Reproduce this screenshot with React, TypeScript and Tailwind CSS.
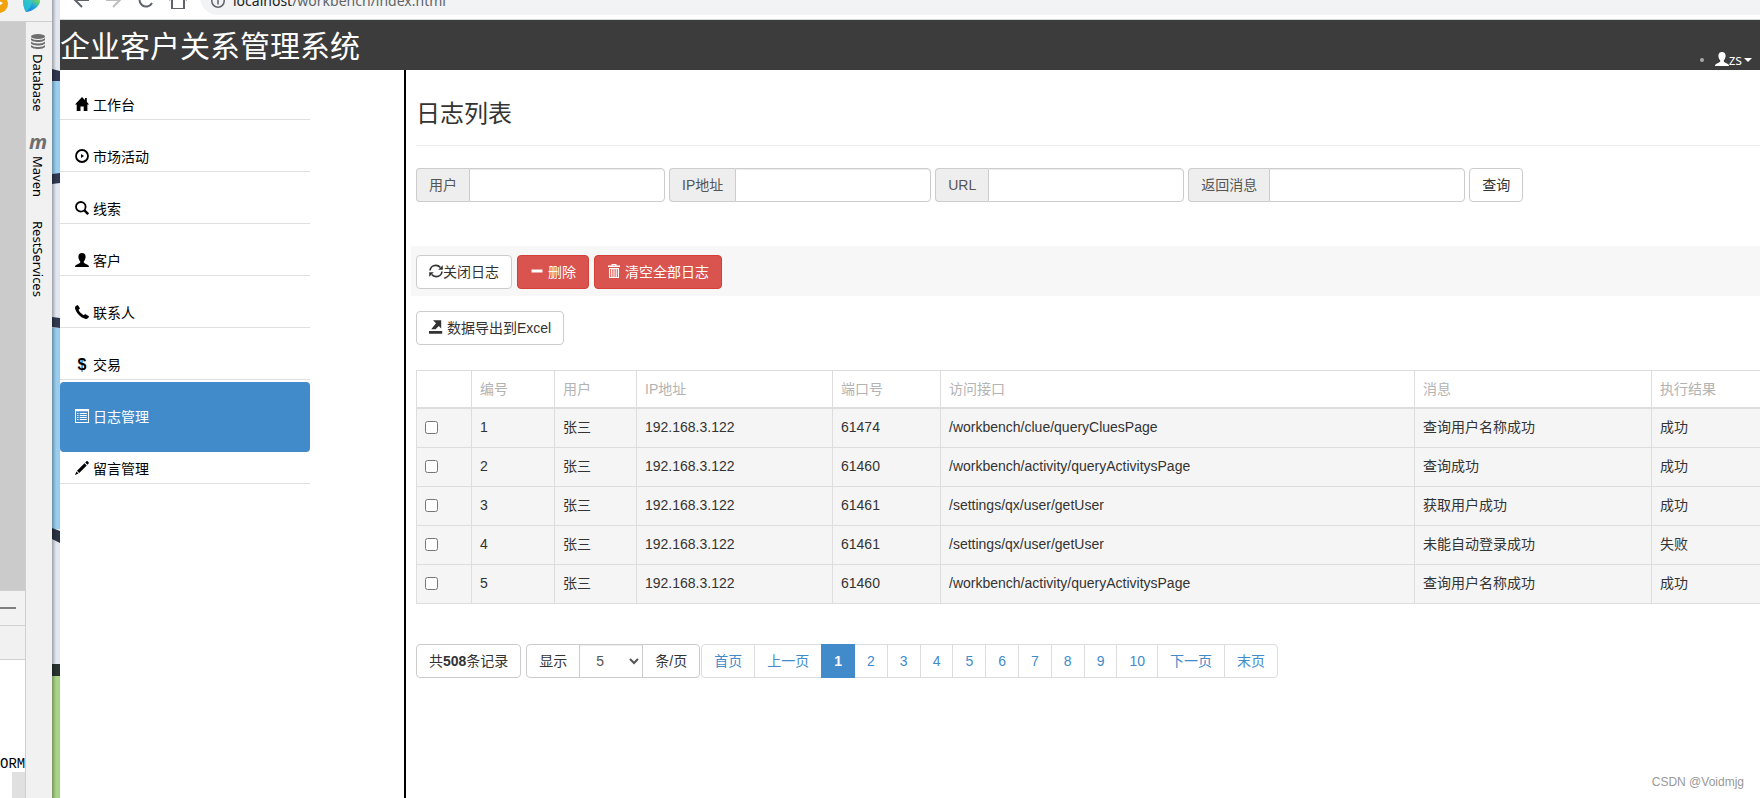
import React, { useState } from "react";
import clsx from "clsx";

type IconProps = { className?: string };

// ---------- Icons ----------
const Glyph = ({ className, children }: IconProps & { children: React.ReactNode }) => (
  <svg
    viewBox="0 0 14 14"
    aria-hidden="true"
    fill="currentColor"
    className={clsx("mb-0.5 size-3.5 shrink-0", className)}
  >
    {children}
  </svg>
);

const HomeGlyph = () => (
  <Glyph>
    <path d="M7 0l3 3V1h1.800v3.800L14 7.600H12.400V14H8.700V9.500H5.500V14H1.700V7.600H0z" />
  </Glyph>
);

const PlayGlyph = () => (
  <Glyph>
    <circle cx="7" cy="7" r="6" fill="none" stroke="currentColor" strokeWidth="1.800" />
    <path d="M6 5v4l3-2z" />
  </Glyph>
);

const SearchGlyph = () => (
  <Glyph>
    <circle cx="5.8" cy="5.8" r="4.8" fill="none" stroke="currentColor" strokeWidth="1.800" />
    <path d="M9.200 9.200l4 4" fill="none" stroke="currentColor" strokeWidth="2.400" />
  </Glyph>
);

const UserGlyph = () => (
  <Glyph>
    <path d="M7 0c2.300 0 3.600 1.500 3.600 3.700 0 1.900-.7 3.500-1.800 4.500v1.300c.4.900 1.700 1.300 3.200 1.900 1.300.5 2 1.300 2 2.600H0c0-1.300.7-2.100 2-2.600 1.500-.6 2.800-1 3.200-1.900V8.200C4.100 7.200 3.400 5.600 3.400 3.700 3.400 1.500 4.700 0 7 0z" />
  </Glyph>
);

const PhoneGlyph = () => (
  <Glyph>
    <path d="M1.200.8L2.800 0l2.200 3.400-1.400 1.400c.5 1.800 2.900 4.300 5.100 5.400l1.400-1.200L14 11.200l-.6 1.600c-.6.900-1.600 1.300-2.700 1.100C5.700 12.800.8 7.400 0 3.200c-.1-1 .4-1.900 1.200-2.400z" />
  </Glyph>
);

const ListGlyph = () => (
  <Glyph>
    <path d="M0 0h14v14H0zM1 2.200V13h12V2.200z" fillRule="evenodd" />
    <path d="M2.200 4h1.300v1H2.200zM4.800 4h7v1h-7zM2.200 6h1.300v1H2.200zM4.800 6h7v1h-7zM2.200 8h1.300v1H2.200zM4.800 8h7v1h-7zM2.200 10h1.300v1H2.200zM4.800 10h7v1h-7z" />
  </Glyph>
);

const PencilGlyph = () => (
  <Glyph>
    <path d="M11.400.4c.4-.4.900-.4 1.300 0l.9.9c.4.400.4.900 0 1.300L12.400 3.800l-2.200-2.200zM9.500 2.300l2.200 2.200-7.500 7.500L2 9.800zM1.400 10.500l2.100 2.100L0 14z" />
  </Glyph>
);

const RefreshGlyph = () => (
  <Glyph>
    <path
      d="M1 6.500C1.300 3.600 3.700 1.400 6.800 1.400c1.900 0 3.400.7 4.500 2.100M13 7.500c-.3 2.900-2.700 5.100-5.800 5.100-1.900 0-3.400-.7-4.500-2.100"
      fill="none"
      stroke="currentColor"
      strokeWidth="1.700"
    />
    <path d="M13.800 1.200v4.600H9.200zM.2 12.800V8.200h4.600z" />
  </Glyph>
);

const MinusGlyph = () => (
  <Glyph>
    <path d="M1.500 5.500h11v3h-11z" />
  </Glyph>
);

const TrashGlyph = () => (
  <Glyph>
    <path d="M4.500 0h5v1.500H13V3H1V1.500h3.500zM5.700.9v.6h2.600V.9z" fillRule="evenodd" />
    <path
      d="M2 4h10v10H2zM3.200 5v8h1V5zM5.400 5v8h1V5zM7.600 5v8h1V5zM9.800 5v8h1V5z"
      fillRule="evenodd"
    />
  </Glyph>
);

const ExportGlyph = () => (
  <Glyph>
    <path d="M0 11h13.200v2.800H0zM4 .2h8.200v8.200L9.800 6 6.500 9.300H2.200L7 3.200z" />
  </Glyph>
);

// ---------- Data ----------
const navItems = [
  { label: "工作台", icon: <HomeGlyph /> },
  { label: "市场活动", icon: <PlayGlyph /> },
  { label: "线索", icon: <SearchGlyph /> },
  { label: "客户", icon: <UserGlyph /> },
  { label: "联系人", icon: <PhoneGlyph /> },
  {
    label: "交易",
    icon: <span className="w-3.5 text-center text-base leading-5 font-bold">$</span>,
  },
  { label: "日志管理", icon: <ListGlyph /> },
  { label: "留言管理", icon: <PencilGlyph /> },
];

const filters = [
  { id: "user", label: "用户" },
  { id: "ip", label: "IP地址" },
  { id: "url", label: "URL" },
  { id: "msg", label: "返回消息" },
];

const columns = [
  { label: "编号", width: "w-[83px]" },
  { label: "用户", width: "w-[82px]" },
  { label: "IP地址", width: "w-[196px]" },
  { label: "端口号", width: "w-[108px]" },
  { label: "访问接口", width: "" },
  { label: "消息", width: "w-[237px]" },
  { label: "执行结果", width: "w-[109px]" },
];

const logs = [
  ["1", "张三", "192.168.3.122", "61474", "/workbench/clue/queryCluesPage", "查询用户名称成功", "成功"],
  ["2", "张三", "192.168.3.122", "61460", "/workbench/activity/queryActivitysPage", "查询成功", "成功"],
  ["3", "张三", "192.168.3.122", "61461", "/settings/qx/user/getUser", "获取用户成功", "成功"],
  ["4", "张三", "192.168.3.122", "61461", "/settings/qx/user/getUser", "未能自动登录成功", "失败"],
  ["5", "张三", "192.168.3.122", "61460", "/workbench/activity/queryActivitysPage", "查询用户名称成功", "成功"],
];

const pages = ["首页", "上一页", "1", "2", "3", "4", "5", "6", "7", "8", "9", "10", "下一页", "末页"];

// ---------- IDE behind the browser window ----------
function IdePanel() {
  return (
    <div className="w-[52px] shrink-0 flex flex-col bg-[#f1f1f1] overflow-hidden">
      <div className="h-[22px] shrink-0 border-b border-[#cfcfcf] bg-[#f2f2f2]">
        <svg width="52" height="21" viewBox="0 0 52 21" aria-hidden="true">
          <defs>
            <linearGradient id="leaf" x1="0" y1="1" x2="1" y2="0">
              <stop offset="0" stopColor="#1a73e0" />
              <stop offset="0.5" stopColor="#18a0e8" />
              <stop offset="1" stopColor="#7ee04a" />
            </linearGradient>
          </defs>
          <circle cx="-1" cy="4" r="9" fill="#f0a30a" />
          <path d="M-1 1l4 2-4 3z" fill="#fff" />
          <path d="M23 0h17c1 5-6 11-14 12-2-3-3-8-3-12z" fill="url(#leaf)" />
          <path d="M23 0h9c0 5-2 9-6 12-2-3-3-8-3-12z" fill="#2fd0c8" opacity="0.700" />
        </svg>
      </div>

      <div className="flex flex-1 min-h-0">
        <div className="flex-1 flex flex-col min-w-0">
          <div className="flex-1 bg-[#cbcbcb]" />
          <div className="h-[35px] flex items-center border-t border-[#d0d0d0] bg-[#f2f2f2]">
            <div className="w-4 h-0.5 bg-[#808080]" />
          </div>
          <div className="h-[35px] border-y border-[#d0d0d0] bg-[#f1f1f1]" />
          <div className="h-[138px] flex flex-col justify-end bg-white">
            <span className="font-['Liberation_Mono'] text-sm leading-4 text-black">ORM</span>
            <div className="ml-3 h-[26px] bg-[#e0e0e0]" />
          </div>
        </div>

        <div className="w-[27px] shrink-0 flex flex-col items-center border-l border-[#cfcfcf] pr-0.5 pt-3 text-black font-['Noto_Sans'] text-[13px] leading-4">
          <svg width="14" height="16" viewBox="0 0 14 16" className="shrink-0" aria-hidden="true">
            <ellipse cx="7" cy="2.500" rx="7" ry="2.500" fill="#6e6e6e" />
            <path
              d="M0 3.800c1 3 13 3 14 0v2c-1 3-13 3-14 0zM0 7.300c1 3 13 3 14 0v2c-1 3-13 3-14 0zM0 10.800c1 3 13 3 14 0v2c-1 3-13 3-14 0z"
              fill="#6e6e6e"
            />
          </svg>
          <span className="mt-1 [writing-mode:vertical-rl]">Database</span>
          <span className="mt-5 text-xl leading-5 font-bold italic text-[#6e6e6e]">m</span>
          <span className="mt-1 [writing-mode:vertical-rl]">Maven</span>
          <span className="mt-6 [writing-mode:vertical-rl]">RestServices</span>
        </div>
      </div>
    </div>
  );
}

function Wallpaper() {
  return (
    <svg
      width="8"
      height="100%"
      viewBox="0 0 8 798"
      preserveAspectRatio="none"
      className="shrink-0"
      aria-hidden="true"
    >
      <defs>
        <linearGradient id="edge" x1="0" x2="1">
          <stop offset="0" stopColor="#000" stopOpacity="0.300" />
          <stop offset="0.500" stopColor="#000" stopOpacity="0" />
        </linearGradient>
      </defs>
      <rect width="8" height="798" fill="#e1e6ef" />
      <path d="M0 69l8 2v10H0z" fill="#2f3650" />
      <rect y="81" width="8" height="93" fill="#98cdef" />
      <path d="M0 174l8-1v10l-8 1z" fill="#2f3a50" />
      <path d="M0 317l8 1v10l-8-1z" fill="#2f3a50" />
      <rect y="328" width="8" height="201" fill="#98cdef" />
      <path d="M0 528l8 3v12l-8-4z" fill="#2a3442" />
      <rect y="664" width="8" height="12" fill="#28322f" />
      <rect y="676" width="8" height="122" fill="#a9d487" />
      <rect width="8" height="798" fill="url(#edge)" />
    </svg>
  );
}

// ---------- Browser toolbar ----------
function BrowserBar() {
  return (
    <div className="h-5 shrink-0 flex flex-col justify-end overflow-hidden border-b border-[#d3d9d5] bg-white pb-1">
      <div className="h-9 shrink-0 flex items-center pl-3">
        <svg width="128" height="24" viewBox="0 0 128 24" fill="none" strokeWidth="2" aria-hidden="true">
          <path d="M17 15H3M10 8l-7 7 7 7" stroke="#5f6368" />
          <path d="M34 15h14M41 8l7 7-7 7" stroke="#bdbdbd" />
          <path d="M80 18a6.600 6.600 0 1 1 0-6" stroke="#5f6368" />
          <path d="M97 15l9-8 9 8M100 13v11h12V13" stroke="#5f6368" />
        </svg>
        <div className="flex-1 h-9 flex items-center gap-2 rounded-l-full bg-[#f1f3f4] pl-[11px] pt-2">
          <svg width="14" height="14" viewBox="0 0 14 14" fill="none" stroke="#5f6368" strokeWidth="1.500" aria-hidden="true">
            <circle cx="7" cy="7" r="6.200" />
            <path d="M7 6v4.500M7 3.500V5" />
          </svg>
          <span className="font-['Noto_Sans'] text-sm text-[#5f6368]">
            <span className="text-[#202124]">localhost</span>/workbench/index.html
          </span>
        </div>
      </div>
    </div>
  );
}

const btn =
  "h-[34px] inline-flex items-center rounded border px-3 text-sm leading-5 whitespace-nowrap";
const btnDefault = "border-[#ccc] bg-white text-[#333]";
const btnDanger = "border-[#d43f3a] bg-[#d9534f] text-white";

export default function App() {
  const [active, setActive] = useState("日志管理");
  const [page, setPage] = useState("1");

  return (
    <div className="flex h-screen overflow-hidden bg-white font-['Liberation_Sans','Noto_Sans_CJK_SC',sans-serif] text-sm text-[#333]">
      <IdePanel />
      <Wallpaper />

      <div className="flex-1 min-w-0 flex flex-col">
        <BrowserBar />

        <header className="h-[50px] shrink-0 flex items-center justify-between bg-[#3c3c3c] text-white">
          <h1 className="pt-1 text-3xl">企业客户关系管理系统</h1>
          <div className="self-end flex items-center gap-[11px] pr-2">
            <span className="size-1 rounded-full bg-[#aaa]" />
            <button className="flex items-center font-['Open_Sans'] text-sm leading-5">
              <UserGlyph />
              zs
              <svg width="8" height="4" viewBox="0 0 8 4" className="ml-0.5" fill="currentColor" aria-hidden="true">
                <path d="M0 0h8L4 4z" />
              </svg>
            </button>
          </div>
        </header>

        <div className="flex flex-1 min-h-0">
          {/* Side menu */}
          <nav className="w-[346px] shrink-0 border-r-2 border-black">
            <ul className="w-[250px] flex flex-col gap-0.5">
              {navItems.map((item) => (
                <li key={item.label} className="h-[50px] border-b border-[#e0e0e0]">
                  <a
                    href="#"
                    onClick={() => setActive(item.label)}
                    className={clsx(
                      "flex items-center gap-1 rounded px-[15px] py-[25px] leading-5",
                      active === item.label ? "relative bg-[#428bca] text-white" : "text-black"
                    )}
                  >
                    {item.icon}
                    {item.label}
                  </a>
                </li>
              ))}
            </ul>
          </nav>

          <main className="relative flex-1 min-w-0 overflow-hidden">
            <div className="ml-2.5 h-[76px] flex items-center border-b border-[#eee] pt-3">
              <h3 className="text-2xl">日志列表</h3>
            </div>

            {/* Filters */}
            <form className="ml-2.5 mt-[22px] flex gap-1" onSubmit={(e) => e.preventDefault()}>
              {filters.map((f) => (
                <div key={f.id} className="flex h-[34px]">
                  <label
                    htmlFor={f.id}
                    className="flex items-center rounded-l border border-r-0 border-[#ccc] bg-[#eee] px-3 text-[#555]"
                  >
                    {f.label}
                  </label>
                  <input
                    id={f.id}
                    type="text"
                    className="w-[196px] rounded-r border border-[#ccc] px-3 text-[#555] shadow-[inset_0_1px_1px_rgba(0,0,0,0.075)]"
                  />
                </div>
              ))}
              <button type="submit" className={clsx(btn, btnDefault)}>
                查询
              </button>
            </form>

            {/* Toolbar */}
            <div className="ml-[5px] mt-11 h-[50px] flex items-center gap-[5px] bg-[#f7f7f7] pl-[5px] pt-0.5">
              <button className={clsx(btn, btnDefault)}>
                <RefreshGlyph />
                关闭日志
              </button>
              <button className={clsx(btn, btnDanger, "gap-1")}>
                <MinusGlyph />
                删除
              </button>
              <button className={clsx(btn, btnDanger, "gap-1")}>
                <TrashGlyph />
                清空全部日志
              </button>
            </div>
            <button className={clsx(btn, btnDefault, "ml-2.5 mt-[15px] gap-1")}>
              <ExportGlyph />
              数据导出到Excel
            </button>

            {/* Log table */}
            <div className="ml-2.5 mt-[25px]">
              <table className="w-full table-fixed border-separate border-spacing-0 border-t border-[#ddd]">
                <thead>
                  <tr className="h-[38px] text-left text-[#b3b3b3]">
                    <th className="w-[55px] border-l border-b-2 border-[#ddd]" />
                    {columns.map((c) => (
                      <th
                        key={c.label}
                        className={clsx("border-l border-b-2 border-[#ddd] px-2 font-normal", c.width)}
                      >
                        {c.label}
                      </th>
                    ))}
                  </tr>
                </thead>
                <tbody>
                  {logs.map((row) => (
                    <tr key={row[0]} className="h-[39px] bg-[#f5f5f5] align-top">
                      <td className="border-l border-b border-[#ddd] px-2 pt-3">
                        <input type="checkbox" aria-label={row[0]} className="block size-[13px]" />
                      </td>
                      {row.map((cell, i) => (
                        <td key={i} className="border-l border-b border-[#ddd] px-2 pt-2">
                          {cell}
                        </td>
                      ))}
                    </tr>
                  ))}
                </tbody>
              </table>
            </div>

            {/* Pagination */}
            <div className="ml-2.5 mt-10 flex items-start">
              <button className={clsx(btn, btnDefault, "mr-[5px]")}>
                共<b>508</b>条记录
              </button>
              <div className="flex mr-0.5">
                <label htmlFor="page-size" className={clsx(btn, btnDefault, "rounded-r-none")}>
                  显示
                </label>
                <select
                  id="page-size"
                  className="-ml-px h-[34px] w-16 border border-[#ccc] bg-white px-3 text-[#555] shadow-[inset_0_1px_1px_rgba(0,0,0,0.075)]"
                >
                  <option>5</option>
                  <option>10</option>
                  <option>20</option>
                </select>
                <span className={clsx(btn, btnDefault, "-ml-px rounded-l-none")}>条/页</span>
              </div>
              <ul className="flex">
                {pages.map((p) => (
                  <li key={p} className="group">
                    <a
                      href="#"
                      onClick={() => setPage(p)}
                      className={clsx(
                        "-ml-px h-[34px] flex items-center border px-3 leading-5 group-first:rounded-l group-last:rounded-r",
                        page === p
                          ? "relative border-[#428bca] bg-[#428bca] font-bold text-white"
                          : "border-[#ddd] bg-white text-[#428bca]"
                      )}
                    >
                      {p}
                    </a>
                  </li>
                ))}
              </ul>
            </div>

            <span className="absolute right-4 bottom-2 text-xs leading-4 text-[#999]">
              CSDN @Voidmjg
            </span>
          </main>
        </div>
      </div>
    </div>
  );
}
